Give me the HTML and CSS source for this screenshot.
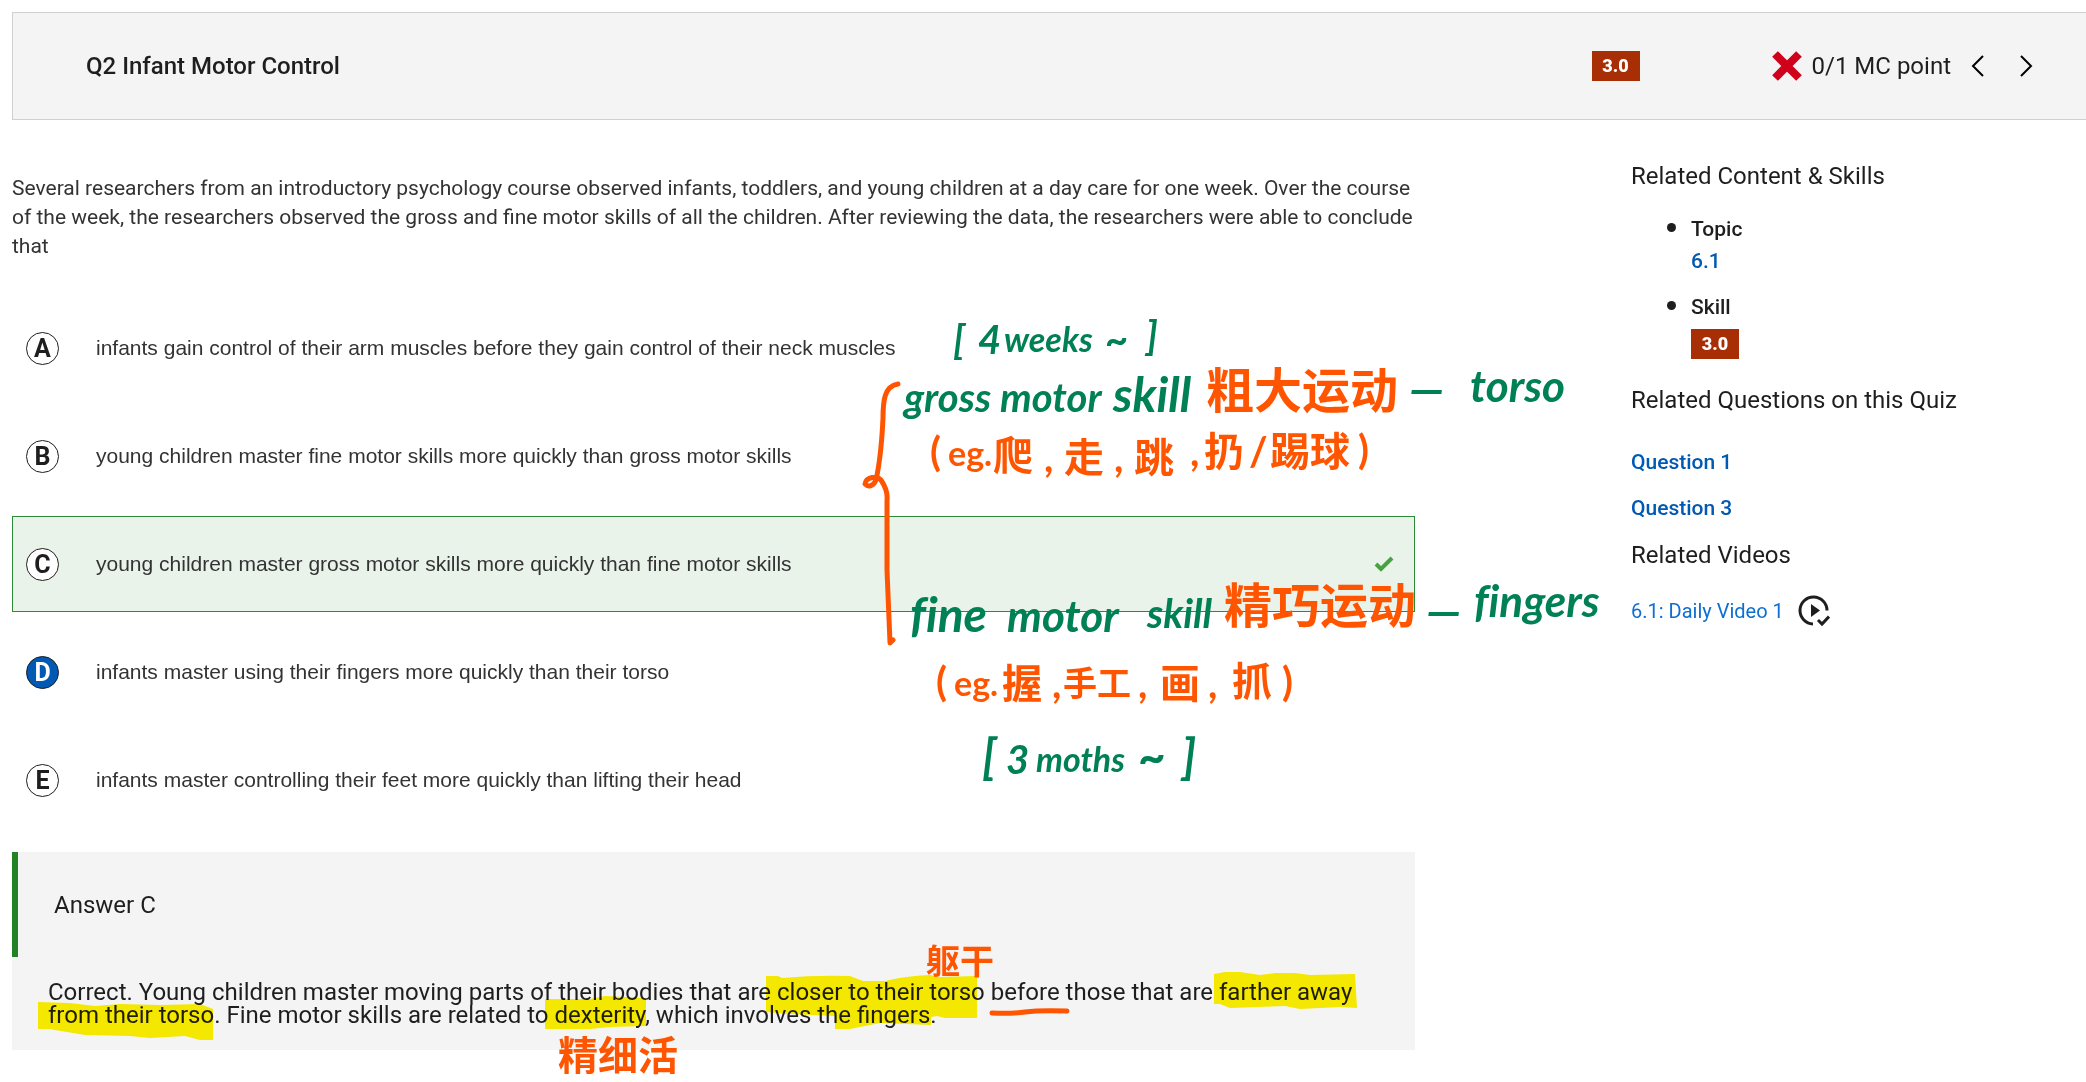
FILE: index.html
```html
<!DOCTYPE html>
<html lang="en">
<head>
<meta charset="utf-8">
<title>Q2 Infant Motor Control</title>
<link rel="stylesheet" href="styles.css">
</head>
<body>
<header class="topbar">
  <h1 class="topbar-title">Q2 Infant Motor Control</h1>
  <span class="badge">3.0</span>
  <div class="score">
    <svg class="cross" viewBox="0 0 30 30" aria-hidden="true"><path d="M3 3 27 27M27 3 3 27"/></svg>
    <span>0/1 MC point</span>
  </div>
  <nav class="pager">
    <button type="button" aria-label="Previous question"><svg viewBox="0 0 14 24" aria-hidden="true"><path d="M12 2 2 12 12 22"/></svg></button>
    <button type="button" aria-label="Next question"><svg viewBox="0 0 14 24" aria-hidden="true"><path d="M2 2 12 12 2 22"/></svg></button>
  </nav>
</header>

<div class="layout">
  <main>
    <p class="stem">Several researchers from an introductory psychology course observed infants, toddlers, and young children at a day care for one week. Over the course of the week, the researchers observed the gross and fine motor skills of all the children. After reviewing the data, the researchers were able to conclude that</p>
    <div class="choices">
      <label class="choice"><input type="radio" name="answer"><span class="letter">A</span><span>infants gain control of their arm muscles before they gain control of their neck muscles</span></label>
      <label class="choice"><input type="radio" name="answer"><span class="letter">B</span><span>young children master fine motor skills more quickly than gross motor skills</span></label>
      <label class="choice correct"><input type="radio" name="answer"><span class="letter">C</span><span>young children master gross motor skills more quickly than fine motor skills</span><svg class="tick" viewBox="0 0 20 16" aria-hidden="true"><path d="M2 8 7 13 18 2"/></svg></label>
      <label class="choice"><input type="radio" name="answer" checked><span class="letter">D</span><span>infants master using their fingers more quickly than their torso</span></label>
      <label class="choice"><input type="radio" name="answer"><span class="letter">E</span><span>infants master controlling their feet more quickly than lifting their head</span></label>
    </div>
    <section class="answer">
      <h2 class="answer-title">Answer C</h2>
      <p class="rationale">Correct. Young children master moving parts of their bodies that are closer to their torso before those that are farther away from their torso. Fine motor skills are related to dexterity, which involves the fingers.</p>
    </section>
  </main>

  <aside class="related">
    <h2>Related Content &amp; Skills</h2>
    <ul class="tags">
      <li>Topic<br><a href="#topic">6.1</a></li>
      <li>Skill<br><span class="badge">3.0</span></li>
    </ul>
    <h2>Related Questions on this Quiz</h2>
    <div class="questions">
      <a href="#q1">Question 1</a>
      <a href="#q3">Question 3</a>
    </div>
    <h2>Related Videos</h2>
    <div class="video">
      <a href="#video">6.1: Daily Video 1</a>
      <svg viewBox="0 0 32 32" aria-hidden="true"><path class="ring" d="M15 29A13.500 13.500 0 1 1 29 15.500M20 25 24 29 31 21.500"/><path class="play" d="M13 9 22 15.500 13 22Z"/></svg>
    </div>
  </aside>
</div>

<svg class="marker" aria-hidden="true">
  <path d="M38 1002 70 1003 95 1006 120 1004 160 1005 200 1004 213 1009V1040H200L185 1036 150 1038 130 1036 85 1035 55 1030 50 1029H38Z"/>
  <path d="M545 999H590L605 996 646 998V1026L610 1027 590 1029H545Z"/>
  <path d="M766 976H778L782 978Q815 975 850 976L863 981H885Q905 976 930 975L940 977 977 976V1018H945L937 1016 931 1017V1025L880 1023 850 1029H835V1016L790 1014 766 1012Z"/>
  <path d="M1214 974 1225 972 1240 972 1260 975 1275 973H1295L1310 975 1355 974 1357 1008 1340 1007 1300 1009 1285 1006 1230 1008 1220 1004H1214Z"/>
</svg>

<svg class="notes">
  <g class="ink-stroke" aria-hidden="true">
    <path d="M898 384C884 386 883 402 883 418C882 440 880 462 876 480C873 487 868 487 865 484C866 477 877 475 881 480C885 486 888 492 887 500V570L890 643 893 640"/>
    <path d="M992 1013Q1010 1014 1025 1012T1067 1011"/>
  </g>
  <g class="green">
    <text x="953" y="354">[</text><text x="978" y="354">4</text><text x="1004" y="352" class="small">weeks</text><text x="1105" y="354">~</text><text x="1146" y="350">]</text>
    <text x="904" y="412">gross</text><text x="1000" y="412">motor</text><text x="1113" y="412" class="large">skill</text>
    <text x="1409" y="406" class="large">—</text><text x="1470" y="402" class="wide">torso</text>
    <text x="910" y="632" class="large">fine</text><text x="1007" y="632" class="wide">motor</text><text x="1147" y="628">skill</text>
    <text x="1426" y="628" class="large">—</text><text x="1474" y="617" class="wide">fingers</text>
    <text x="982" y="774" class="large">[</text><text x="1006" y="774">3</text><text x="1036" y="772" class="small">moths</text><text x="1138" y="774" class="large">~</text><text x="1182" y="774" class="large">]</text>
  </g>
  <g class="orange">
    <text x="1206" y="408" class="large">粗大运动</text>
    <text x="930" y="466">(</text><text x="948" y="466" class="small">eg.</text><text x="993" y="470">爬</text><text x="1044" y="472">,</text><text x="1064" y="472">走</text><text x="1114" y="472">,</text><text x="1134" y="472">跳</text><text x="1190" y="466">,</text><text x="1204" y="466">扔</text><text x="1249" y="466">/</text><text x="1270" y="466">踢球</text><text x="1358" y="464">)</text>
    <text x="1224" y="623" class="large">精巧运动</text>
    <text x="936" y="696">(</text><text x="954" y="696" class="small">eg.</text><text x="1002" y="698">握</text><text x="1052" y="698">,</text><text x="1063" y="696" class="small">手工</text><text x="1138" y="698">,</text><text x="1160" y="698">画</text><text x="1208" y="698">,</text><text x="1232" y="696">抓</text><text x="1282" y="696">)</text>
    <text x="926" y="974" class="small">躯干</text>
    <text x="558" y="1070">精细活</text>
  </g>
</svg>
</body>
</html>
```
FILE: styles.css
```css
* { box-sizing: border-box; }

body {
  position: relative;
  margin: 0;
  padding: 12px 0 32px 12px;
  background: #fff;
  color: #1e1e1e;
  font-family: Roboto, sans-serif;
  font-size: 21px;
  overflow-x: hidden;
}

h1, h2, p, ul { margin: 0; padding: 0; }

a { color: #0059b3; text-decoration: none; }

.topbar {
  display: flex;
  align-items: center;
  height: 108px;
  padding: 0 53px 0 73px;
  background: #f4f4f4;
  border: 1px solid #d0d0d0;
  border-right: 0;
}

.topbar-title {
  flex: 1;
  font-size: 24px;
  font-weight: 500;
}

.badge {
  display: inline-block;
  width: 48px;
  height: 30px;
  background: #a82e05;
  color: #fff;
  font-size: 18px;
  font-weight: 900;
  line-height: 30px;
  text-align: center;
}

.score {
  display: flex;
  align-items: center;
  gap: 10px;
  margin-left: 132px;
  font-size: 24px;
}

.cross { width: 30px; height: 30px; }
.cross path { fill: none; stroke: #d0021b; stroke-width: 8; }

.pager { display: flex; gap: 34px; margin-left: 20px; }

.pager button {
  display: block;
  width: 14px;
  height: 24px;
  padding: 0;
  border: 0;
  background: none;
}

.pager svg { display: block; width: 14px; height: 24px; }
.pager path { fill: none; stroke: #000; stroke-width: 2; }

.layout {
  display: grid;
  grid-template-columns: 1403fr 455fr;
  column-gap: 216px;
  align-items: start;
}

.stem {
  padding-top: 54px;
  margin-bottom: 39px;
  line-height: 29px;
  color: #333;
}

.choices { display: grid; gap: 12px; }

.choice {
  display: grid;
  grid-template-columns: 33px 1fr auto;
  column-gap: 37px;
  align-items: center;
  height: 96px;
  padding: 0 20px 0 13px;
  border: 1px solid transparent;
  color: #333;
  font-family: "Liberation Sans", sans-serif;
  font-size: 21px;
}

.choice.correct { background: #e9f3ea; border-color: #2e8b35; }

.choice input {
  grid-area: 1 / 1;
  appearance: none;
  width: 33px;
  height: 33px;
  margin: 0;
  border: 1px solid #1e1e1e;
  border-radius: 50%;
  background: #fff;
}

.choice input:checked { background: #0059b3; }
.choice input:checked + .letter { color: #fff; }

.letter {
  grid-area: 1 / 1;
  color: #1e1e1e;
  font-family: Roboto, sans-serif;
  font-size: 25px;
  font-weight: 700;
  text-align: center;
}

.tick { width: 20px; height: 16px; }
.tick path { fill: none; stroke: #48a23f; stroke-width: 4; }

.answer { margin-top: 24px; padding-bottom: 23px; background: #f4f4f4; }

.answer-title {
  display: flex;
  align-items: center;
  height: 105px;
  padding-left: 36px;
  border-left: 6px solid #218226;
  font-size: 24px;
  font-weight: 400;
}

.rationale {
  padding: 24px 36px 0;
  font-size: 24px;
  line-height: 23px;
}

.related { padding-top: 42px; }
.related h2 { font-size: 24px; font-weight: 400; line-height: 28px; }

.tags {
  display: grid;
  gap: 12px;
  margin: 21px 0 27px;
  padding-left: 60px;
  font-weight: 500;
  line-height: 32px;
}

.tags li::marker { font-size: 28px; }
.tags .badge { display: block; margin-top: 6px; }

.questions {
  display: grid;
  gap: 14px;
  justify-items: start;
  margin: 32px 0 17px;
  font-weight: 500;
  line-height: 32px;
}

.video {
  display: flex;
  align-items: center;
  gap: 14px;
  margin-top: 26px;
  font-size: 20px;
  line-height: 32px;
}

.video a { color: #0d6fd1; }
.video svg { width: 32px; height: 32px; }
.ring { fill: none; stroke: #1e1e1e; stroke-width: 3; }
.play { fill: #1e1e1e; }

/* Hand-made annotations laid over the page */
.marker, .notes {
  position: absolute;
  top: 0;
  left: 0;
  width: 100%;
  height: 100%;
  overflow: visible;
  pointer-events: none;
}

.marker { mix-blend-mode: multiply; fill: #fff200; }

.notes {
  font-family: Lato, "Noto Sans CJK SC", sans-serif;
  font-size: 40px;
  font-style: italic;
  font-weight: 700;
  font-variant-ligatures: none;
}

.notes .small { font-size: 34px; }
.notes .wide { font-size: 44px; }
.notes .large { font-size: 48px; }
.green { fill: #008055; }
.orange { fill: #ff5500; font-style: normal; }

.ink-stroke {
  fill: none;
  stroke: #ff5500;
  stroke-width: 5;
  stroke-linecap: round;
  stroke-linejoin: round;
}
```
